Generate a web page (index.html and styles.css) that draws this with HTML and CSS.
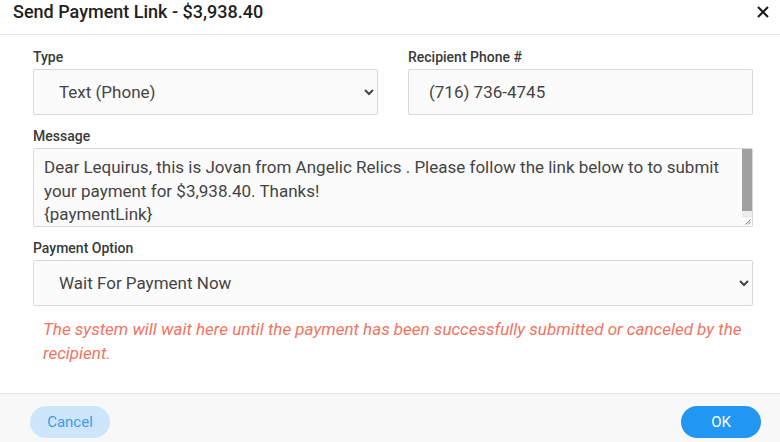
FILE: index.html
```html
<!DOCTYPE html>
<html lang="en">
<head>
  <meta charset="UTF-8">
  <meta name="viewport" content="width=device-width, initial-scale=1.0">
  <title>Send Payment Link</title>
  <link rel="stylesheet" href="styles.css">
</head>
<body>
  <div class="modal">
    <div class="modal-header">
      <h3 class="modal-title">Send Payment Link - $3,938.40</h3>
      <button class="close-btn" aria-label="Close">
        <svg width="12" height="12" viewBox="0 0 12 12"><path d="M1 1 L11 11 M11 1 L1 11" stroke="#1a1a1a" stroke-width="2" fill="none"/></svg>
      </button>
    </div>

    <div class="modal-body">
      <div class="form-row">
        <div class="field">
          <label for="type">Type</label>
          <select id="type" class="control">
            <option>Text (Phone)</option>
            <option>Email</option>
          </select>
        </div>
        <div class="field">
          <label for="phone">Recipient Phone #</label>
          <input id="phone" class="control" value="(716) 736-4745">
        </div>
      </div>

      <div class="field">
        <label for="message">Message</label>
        <div class="textarea-wrap">
          <textarea id="message" class="control message">Dear Lequirus, this is Jovan from Angelic Relics . Please follow the link below to to submit your payment for $3,938.40. Thanks!
{paymentLink}</textarea>
          <div class="fake-scroll">
            <div class="thumb"></div>
            <div class="track"></div>
            <div class="corner">
              <svg width="6" height="6" viewBox="0 0 6 6"><path d="M0.5 5.5 L5.5 0.5 M3 5.5 L5.5 3" stroke="#777" stroke-width="1" fill="none"/></svg>
            </div>
          </div>
        </div>
      </div>

      <div class="field">
        <label for="option">Payment Option</label>
        <select id="option" class="control">
          <option>Wait For Payment Now</option>
          <option>Send Link Only</option>
        </select>
      </div>

      <p class="notice">The system will wait here until the payment has been successfully submitted or canceled by the recipient.</p>
    </div>

    <div class="modal-footer">
      <button class="btn btn-light">Cancel</button>
      <button class="btn btn-primary">OK</button>
    </div>
  </div>
</body>
</html>
```

FILE: styles.css
```css
* { box-sizing: border-box; }

body {
  margin: 0;
  background: #ffffff;
  color: #333;
  font-family: Roboto, 'Liberation Sans', sans-serif;
}

.modal {
  width: 780px;
  min-height: 442px;
  display: flex;
  flex-direction: column;
}

/* Header */
.modal-header {
  height: 35px;
  padding: 0 11px 0 13px;
  border-bottom: 1px solid #e3e3e3;
  display: flex;
  justify-content: space-between;
  align-items: flex-start;
}
.modal-title {
  margin: 0;
  font-size: 18px;
  font-weight: 500;
  line-height: 24px;
  color: #1f1f1f;
}
.close-btn {
  background: none;
  border: none;
  padding: 0;
  margin-top: 6px;
  width: 12px;
  height: 12px;
  cursor: pointer;
  display: flex;
}

/* Body */
.modal-body {
  padding: 12px 27px 28px 33px;
  display: flex;
  flex-direction: column;
  gap: 11px;
}
.form-row {
  display: grid;
  grid-template-columns: 1fr 1fr;
  gap: 30px;
}
.field label {
  display: block;
  font-size: 14px;
  font-weight: 500;
  line-height: 20px;
  color: #3a3a3a;
  margin-bottom: 2px;
}
.control {
  display: block;
  width: 100%;
  height: 46px;
  padding: 0 20px;
  border: 1px solid #d9d9d9;
  border-radius: 2px;
  background-color: #fbfbfb;
  font-family: Roboto, 'Liberation Sans', sans-serif;
  font-size: 17px;
  color: #444;
  outline: none;
}
select.control { padding-left: 21px; }

.textarea-wrap { position: relative; }
.message {
  height: 79px;
  padding: 7px 20px 6px 10px;
  line-height: 23.5px;
  resize: none;
  overflow-y: auto;
}

/* scrollbar drawn on top of the textarea */
.fake-scroll {
  position: absolute;
  top: 1px;
  right: 1px;
  bottom: 1px;
  width: 10px;
  display: flex;
  flex-direction: column;
}
.fake-scroll .thumb { height: 62px; background: #a0a0a0; }
.fake-scroll .track { flex: 1; background: #ececec; }
.fake-scroll .corner {
  height: 10px;
  background: #fbfbfb;
  border-top: 1px solid #e4e4e4;
  display: flex;
  align-items: flex-end;
  justify-content: flex-end;
  padding: 0 1px 1px 0;
}

.notice {
  margin: 0;
  padding-left: 10px;
  font-size: 17px;
  font-style: italic;
  line-height: 24px;
  color: #f4735f;
}

/* Footer */
.modal-footer {
  flex: 1;
  background: #f8f8f8;
  border-top: 1px solid #e3e3e3;
  padding: 12px 19px 0 30px;
  display: flex;
  justify-content: space-between;
  align-items: flex-start;
}
.btn {
  width: 80px;
  height: 32px;
  border: none;
  border-radius: 16px;
  font-family: Roboto, 'Liberation Sans', sans-serif;
  font-size: 15px;
  cursor: pointer;
}
.btn-light { background: #cde6fb; color: #3d9be9; }
.btn-primary { background: #2196f3; color: #ffffff; }
```
